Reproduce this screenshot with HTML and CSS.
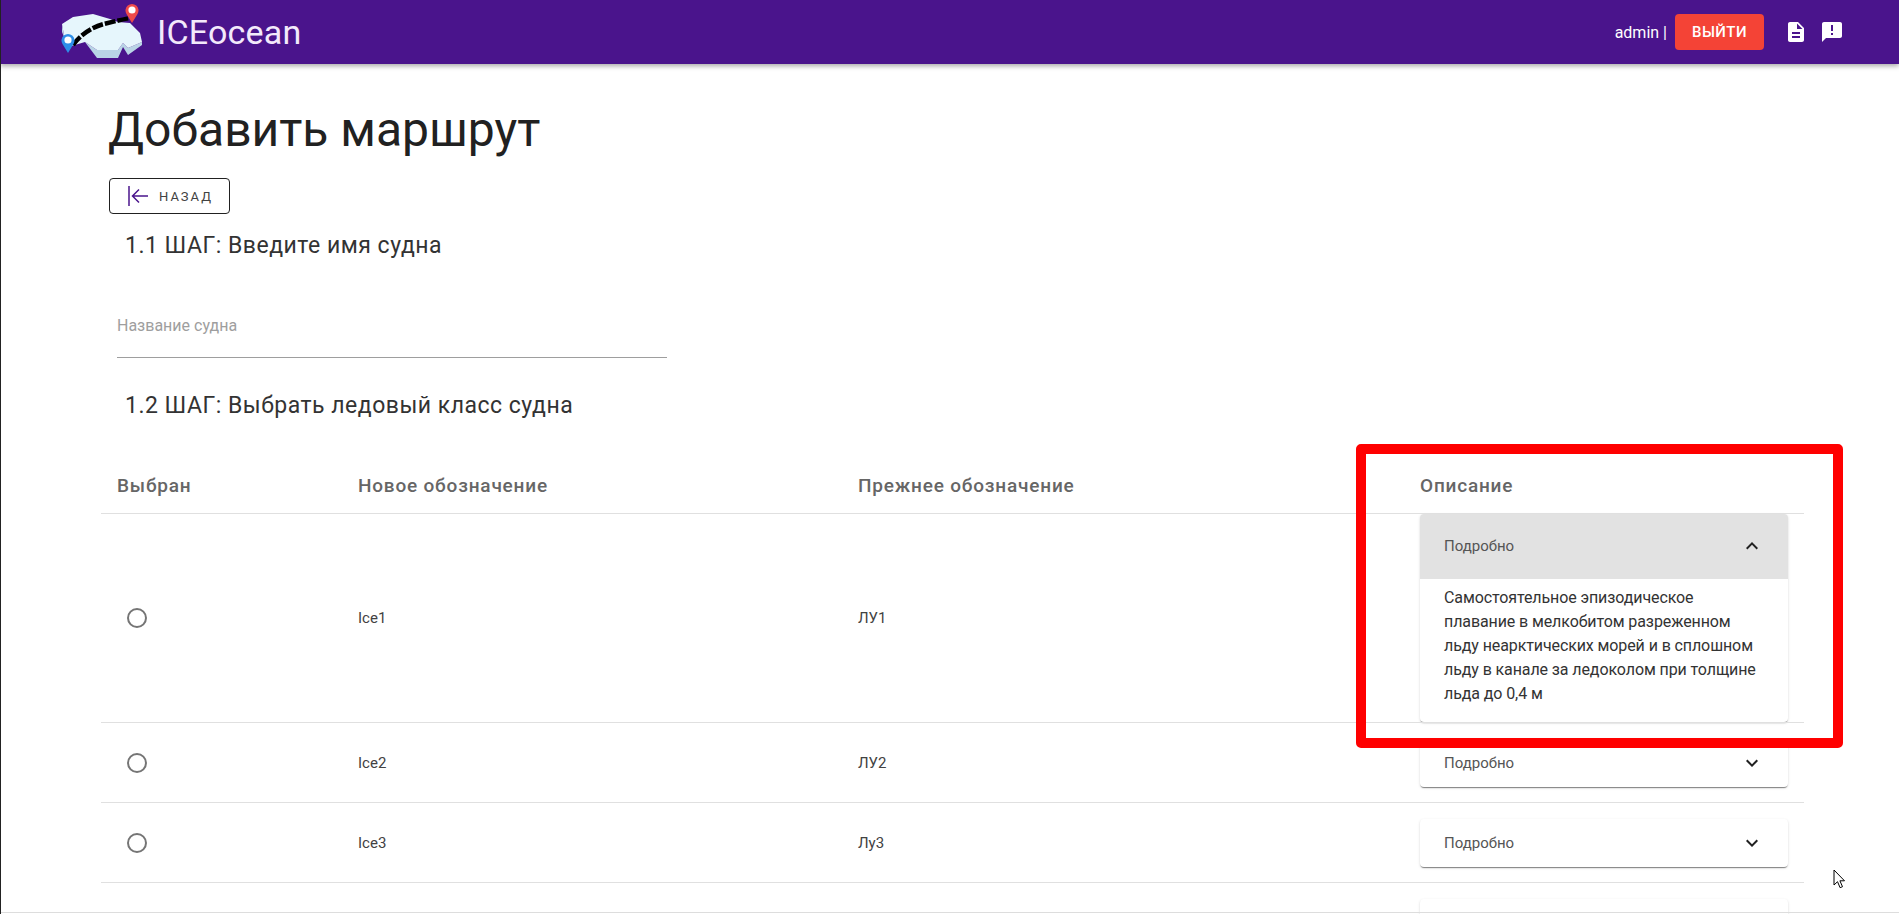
FILE: index.html
```html
<!DOCTYPE html>
<html lang="ru">
<head>
  <meta charset="UTF-8" />
  <title>ICEocean</title>
  <link rel="stylesheet" href="styles.css">
</head>
<body>

<header class="topbar">
  <div class="brand">
    <svg class="logo" viewBox="60 4 84 56">
      <polygon points="85,42 97,58 118,58 123,47 128,55 142,45 142,42 128,48 123,43 118,50 97,50" fill="#b9d5e6"/>
      <polygon points="62,24 62,32 68,47 64,35" fill="#b9d5e6"/>
      <polygon points="62,24 73,17 93,14 110,19 118,22 130,23 140,33 142,42 128,48 123,43 118,50 97,50 85,42 68,47 64,35" fill="#e6f6fc"/>
      <path d="M73 45 C80 35 92 27 104 24 C112 22 120 20 130 18" fill="none" stroke="#000" stroke-width="4.5" stroke-dasharray="11 2"/>
      <path d="M68 53 L62.5 44 A6.5 6.5 0 1 1 73.5 44 Z" fill="#2e8fe8"/>
      <circle cx="68" cy="40" r="3.6" fill="#fff"/>
      <path d="M132 23 L126.5 14 A6.5 6.5 0 1 1 137.5 14 Z" fill="#ef4a4a"/>
      <circle cx="132" cy="10" r="3.6" fill="#fff"/>
    </svg>
    <span class="brand-name">ICEocean</span>
  </div>
  <div class="user">
    <span class="user-name">admin |</span>
    <button class="logout" type="button">Выйти</button>
    <svg class="top-icon doc" viewBox="0 0 24 24"><path d="M14 2H6c-1.1 0-1.99.9-1.99 2L4 20c0 1.1.89 2 1.99 2H18c1.1 0 2-.9 2-2V8l-6-6zm2 16H8v-2h8v2zm0-4H8v-2h8v2zm-3-5V3.5L18.5 9H13z"/></svg>
    <svg class="top-icon" viewBox="0 0 24 24"><path d="M20 2H4c-1.1 0-1.99.9-1.99 2L2 22l4-4h14c1.1 0 2-.9 2-2V4c0-1.1-.9-2-2-2zm-7 9h-2V5h2v6zm0 4h-2v-2h2v2z"/></svg>
  </div>
</header>

<main class="content">
  <h1 class="title">Добавить маршрут</h1>

  <button class="back" type="button">
    <svg class="back-icon" viewBox="0 0 20 20">
      <path d="M1 0v20" stroke="#4a148c" stroke-width="1.5" fill="none"/>
      <path d="M20 10H5M11 3.5L4.5 10l6.5 6.5" stroke="#4a148c" stroke-width="1.5" fill="none"/>
    </svg>
    <span>Назад</span>
  </button>

  <h2 class="step">1.1 ШАГ: Введите имя судна</h2>

  <div class="field">
    <label for="ship">Название судна</label>
    <input id="ship" type="text" />
  </div>

  <h2 class="step step-two">1.2 ШАГ: Выбрать ледовый класс судна</h2>

  <table class="classes">
    <colgroup>
      <col class="col-check" />
      <col class="col-new" />
      <col class="col-old" />
      <col class="col-desc" />
    </colgroup>
    <thead>
      <tr>
        <th>Выбран</th>
        <th>Новое обозначение</th>
        <th>Прежнее обозначение</th>
        <th>Описание</th>
      </tr>
    </thead>
    <tbody>
      <tr>
        <td><span class="radio"></span></td>
        <td>Ice1</td>
        <td>ЛУ1</td>
        <td class="desc">
          <div class="panel open">
            <div class="panel-head">
              <span>Подробно</span>
              <svg class="chevron" viewBox="0 0 24 24"><path d="M12 8l-6 6 1.41 1.41L12 10.83l4.59 4.58L18 14z"/></svg>
            </div>
            <p class="panel-body">Самостоятельное эпизодическое плавание в мелкобитом разреженном льду неарктических морей и в сплошном льду в канале за ледоколом при толщине льда до 0,4 м</p>
          </div>
        </td>
      </tr>
      <tr>
        <td><span class="radio"></span></td>
        <td>Ice2</td>
        <td>ЛУ2</td>
        <td>
          <div class="panel">
            <div class="panel-head">
              <span>Подробно</span>
              <svg class="chevron" viewBox="0 0 24 24"><path d="M16.59 8.59L12 13.17 7.41 8.59 6 10l6 6 6-6z"/></svg>
            </div>
          </div>
        </td>
      </tr>
      <tr>
        <td><span class="radio"></span></td>
        <td>Ice3</td>
        <td>Лу3</td>
        <td>
          <div class="panel">
            <div class="panel-head">
              <span>Подробно</span>
              <svg class="chevron" viewBox="0 0 24 24"><path d="M16.59 8.59L12 13.17 7.41 8.59 6 10l6 6 6-6z"/></svg>
            </div>
          </div>
        </td>
      </tr>
      <tr>
        <td></td>
        <td></td>
        <td></td>
        <td>
          <div class="panel">
            <div class="panel-head"></div>
          </div>
        </td>
      </tr>
    </tbody>
  </table>
</main>

<!-- red frame drawn over the screenshot -->
<div class="highlight"></div>

<svg class="cursor" viewBox="0 0 12 20">
  <path d="M1 1v15l3.5-3.3 2.6 6 2.4-1-2.6-5.9h4.6z" fill="#fff" stroke="#000" stroke-width="1"/>
</svg>

</body>
</html>
```

FILE: styles.css
```css
html, body { height: 100%; }
body {
  margin: 0; height: 914px; overflow: hidden; position: relative;
  font-family: Roboto, Arial, sans-serif; color: #212121; background: #fff;
  box-sizing: border-box; border-left: 1px solid #222;
}
body::after {
  content: ""; position: absolute; left: 0; right: 0; bottom: 1px;
  height: 1px; background: #ddd;
}

.topbar {
  height: 64px; margin-left: -1px; background: #4a148c; color: #fff;
  display: flex; align-items: center; justify-content: space-between;
  box-shadow: 0 2px 5px rgba(0,0,0,0.35);
  position: relative; z-index: 1;
}
.brand { display: flex; align-items: center; margin-left: 60px; }
.logo { width: 84px; height: 56px; margin-right: 13px; }
.brand-name { font-size: 34px; letter-spacing: 0.2px; color: #f3e9fb; }

.user { display: flex; align-items: center; margin-right: 55px; }
.user-name { font-size: 16px; margin-right: 8px; }
.logout {
  width: 89px; height: 36px; border: none; border-radius: 4px;
  background: #f44336; color: #fff; font: 500 15px Roboto, sans-serif;
  letter-spacing: 0.4px; text-transform: uppercase; margin-right: 20px;
}
.top-icon { width: 24px; height: 24px; fill: #fff; }
.top-icon.doc { margin-right: 12px; }

.content { height: 850px; box-sizing: border-box; overflow: hidden; padding: 38px 0 0 100px; }
.title { font-size: 48px; font-weight: 400; line-height: 56px; margin: 0 0 20px 7px; }

.back {
  display: flex; align-items: center; width: 121px; height: 36px;
  margin-left: 8px; padding: 0 0 0 18px; box-sizing: border-box;
  background: #fff; border: 1px solid #212121; border-radius: 4px;
  font: 400 13px Roboto, sans-serif; letter-spacing: 2px; text-transform: uppercase;
  color: #424242;
}
.back-icon { width: 20px; height: 20px; margin-right: 11px; }

.step { font-size: 23px; font-weight: 400; line-height: 32px; margin: 16px 0 0 24px; color: #333; letter-spacing: 0.5px; }
.step-two { margin-top: 32px; }

.field { width: 550px; margin: 54px 0 0 16px; position: relative; }
.field label { display: block; font-size: 16px; line-height: 20px; color: #9e9e9e; }
.field input {
  display: block; width: 100%; height: 22px; padding: 0; box-sizing: border-box;
  border: none; border-bottom: 1px solid #9e9e9e; outline: none;
}

.classes { width: 1703px; margin-top: 37px; border-collapse: collapse; table-layout: fixed; }
.col-check { width: 241px; }
.col-new { width: 500px; }
.col-old { width: 562px; }
.col-desc { width: 400px; }
.classes th {
  height: 54px; padding: 0 16px; box-sizing: border-box; text-align: left;
  font-size: 19px; font-weight: 500; color: #666; letter-spacing: 0.8px;
  border-bottom: 1px solid #e0e0e0;
}
.classes td {
  padding: 16px 16px 15px; font-size: 15px; color: #424242;
  border-bottom: 1px solid #e0e0e0;
}
.classes td.desc { padding: 0 16px; vertical-align: top; }

.radio {
  display: block; width: 20px; height: 20px; box-sizing: border-box; margin-left: 10px;
  border: 2px solid #757575; border-radius: 50%;
}

.panel {
  background: #fff; border-radius: 4px;
  box-shadow: 0 2px 1px -1px rgba(0,0,0,0.35), 0 1px 1px rgba(0,0,0,0.14), 0 1px 3px rgba(0,0,0,0.12);
}
.panel-head {
  height: 48px; padding: 0 24px; display: flex; align-items: center; justify-content: space-between;
  font-size: 15px; color: #555;
}
.panel.open .panel-head { height: 65px; background: #e2e2e2; border-radius: 4px 4px 0 0; }
.chevron { width: 24px; height: 24px; fill: #212121; }
.panel-body {
  margin: 0; padding: 7px 24px 16px; font-size: 16px; line-height: 24px; color: #333; letter-spacing: -0.1px;
}

.highlight {
  position: absolute; left: 1355px; top: 444px; width: 487px; height: 304px;
  box-sizing: border-box; border: 10px solid #f00; border-radius: 5px;
}
.cursor { position: absolute; left: 1832px; top: 869px; width: 12px; height: 20px; }
```
